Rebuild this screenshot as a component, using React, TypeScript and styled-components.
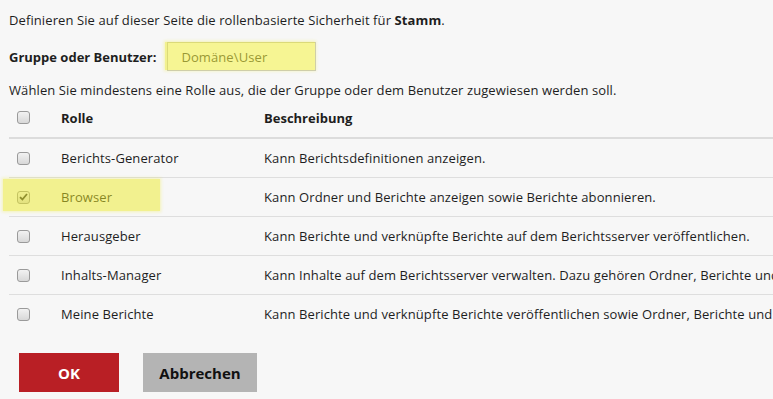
import styled, { createGlobalStyle } from "styled-components";

const GlobalStyle = createGlobalStyle`
    html, body {
        margin: 0;
        padding: 0;
        background: #f7f7f7;
        overflow: hidden;
    }
    body {
        font-family: "Open Sans", "Liberation Sans", sans-serif;
        font-size: 13px;
        letter-spacing: 0.1px;
        color: #1e1e1e;
    }
`;

const Page = styled.div`
    width: 773px;
    height: 399px;
    padding: 12px 0 0 9px;
    box-sizing: border-box;
    overflow: hidden;
`;

const Intro = styled.p`
    margin: 0;
    line-height: 16px;
    white-space: nowrap;
`;

const FormRow = styled.div`
    display: flex;
    align-items: center;
    margin-top: 14px;
    height: 29px;
`;

const Label = styled.label`
    font-weight: 700;
    letter-spacing: 0;
    margin-right: 11px;
`;

const InputWrap = styled.div`
    position: relative;
`;

const TextInput = styled.div`
    width: 149px;
    height: 29px;
    box-sizing: border-box;
    border: 1px solid #c8c8c8;
    background: #fff;
    padding-left: 13px;
    display: flex;
    align-items: center;
    color: #444;
`;

const Highlight = styled.div`
    position: absolute;
    background: rgba(238, 236, 40, 0.5);
    box-shadow: 0 0 3px 1px rgba(238, 236, 40, 0.3);
    pointer-events: none;
`;

const Hint = styled.p`
    margin: 11px 0 0;
    line-height: 16px;
    white-space: nowrap;
`;

const Table = styled.div`
    width: 764px;
`;

const Row = styled.div<{ $header?: boolean; $last?: boolean }>`
    position: relative;
    display: grid;
    grid-template-columns: 43px 203px 1fr;
    align-items: center;
    height: ${p => (p.$header ? 39 : 38)}px;
    border-bottom: ${p =>
        p.$header ? "2px solid #dcdcdc" : p.$last ? "none" : "1px solid #dedede"};
    font-weight: ${p => (p.$header ? 700 : 400)};
    letter-spacing: ${p => (p.$header ? 0 : 0.1)}px;
    white-space: nowrap;
`;

const CheckCell = styled.div`
    padding-left: 8px;
    display: flex;
    align-items: center;
`;

const Cell = styled.div`
    padding-left: 9px;
    overflow: hidden;
`;

const Box = styled.span`
    width: 13px;
    height: 13px;
    box-sizing: border-box;
    border: 1px solid #9a9a9a;
    border-radius: 3px;
    background: linear-gradient(#f2f2f2, #d8d8d8);
    display: flex;
    align-items: center;
    justify-content: center;
`;

const Buttons = styled.div`
    display: flex;
    gap: 24px;
    margin: 20px 0 0 10px;
`;

const Button = styled.button<{ $primary?: boolean }>`
    height: 39px;
    width: ${p => (p.$primary ? 100 : 114)}px;
    border: none;
    font-family: "Open Sans", "Liberation Sans", sans-serif;
    font-size: 15px;
    font-weight: 700;
    background: ${p => (p.$primary ? "#b91f25" : "#b4b4b4")};
    color: ${p => (p.$primary ? "#fff" : "#111")};
    padding: 0;
`;

function Checkbox({ checked }: { checked?: boolean }) {
    return (
        <Box>
            {checked && (
                <svg width="9" height="8" viewBox="0 0 9 8">
                    <path d="M1 4.2 L3.4 6.5 L8 1" fill="none" stroke="#333" strokeWidth="1.8" />
                </svg>
            )}
        </Box>
    );
}

const roles = [
    { name: "Berichts-Generator", desc: "Kann Berichtsdefinitionen anzeigen." },
    { name: "Browser", desc: "Kann Ordner und Berichte anzeigen sowie Berichte abonnieren.", checked: true },
    { name: "Herausgeber", desc: "Kann Berichte und verknüpfte Berichte auf dem Berichtsserver veröffentlichen." },
    {
        name: "Inhalts-Manager",
        desc: "Kann Inhalte auf dem Berichtsserver verwalten. Dazu gehören Ordner, Berichte und Ressourcen.",
    },
    {
        name: "Meine Berichte",
        desc: "Kann Berichte und verknüpfte Berichte veröffentlichen sowie Ordner, Berichte und Ressourcen verwalten.",
    },
];

export default function App() {
    return (
        <>
            <GlobalStyle />
            <Page>
                <Intro>
                    Definieren Sie auf dieser Seite die rollenbasierte Sicherheit für <b>Stamm</b>.
                </Intro>
                <FormRow>
                    <Label>Gruppe oder Benutzer:</Label>
                    <InputWrap>
                        <TextInput>Domäne\User</TextInput>
                        <Highlight style={{ left: -2, top: 0, width: 150, height: 28 }} />
                    </InputWrap>
                </FormRow>
                <Hint>
                    Wählen Sie mindestens eine Rolle aus, die der Gruppe oder dem Benutzer zugewiesen werden soll.
                </Hint>
                <Table>
                    <Row $header>
                        <CheckCell>
                            <Checkbox />
                        </CheckCell>
                        <Cell>Rolle</Cell>
                        <Cell>Beschreibung</Cell>
                    </Row>
                    {roles.map((r, i) => (
                        <Row key={r.name} $last={i === roles.length - 1}>
                            <CheckCell>
                                <Checkbox checked={r.checked} />
                            </CheckCell>
                            <Cell>{r.name}</Cell>
                            <Cell>{r.desc}</Cell>
                            {r.checked && <Highlight style={{ left: -6, top: 1, width: 157, height: 32 }} />}
                        </Row>
                    ))}
                </Table>
                <Buttons>
                    <Button $primary>OK</Button>
                    <Button>Abbrechen</Button>
                </Buttons>
            </Page>
        </>
    );
}
